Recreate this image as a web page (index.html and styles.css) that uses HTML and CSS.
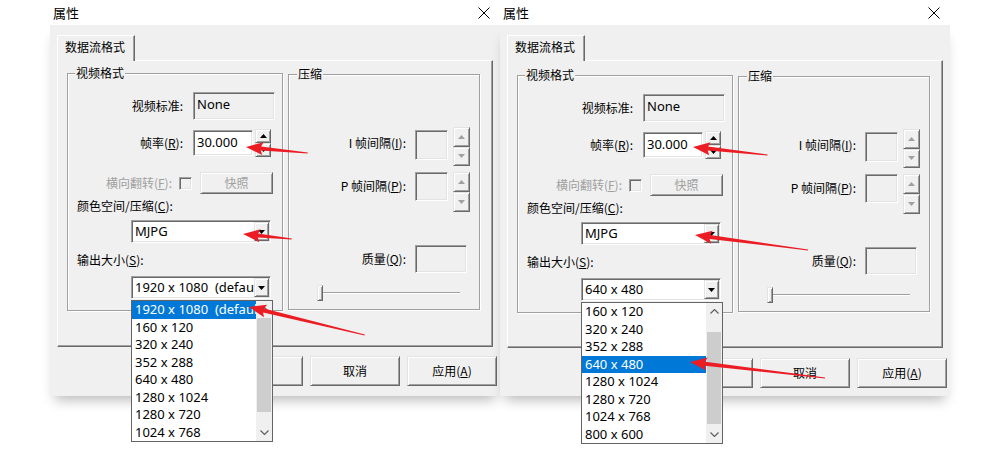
FILE: index.html
```html
<!DOCTYPE html>
<html lang="zh-CN">
<head>
<meta charset="utf-8">
<title>属性</title>
<link rel="stylesheet" href="styles.css">
</head>
<body>
<div class="stage">

  <section class="dialog">
    <header class="titlebar">
      <span class="title">属性</span>
      <svg class="close" width="12" height="12" viewBox="0 0 12 12"><path d="M0.5 0.5L11.5 11.5M11.5 0.5L0.5 11.5" stroke="#000" stroke-width="1" fill="none"/></svg>
    </header>
    <div class="dlg-body">
      <div class="tabstrip"><div class="tab">数据流格式</div></div>
      <div class="tabpage">
        <div class="group group-video">
          <span class="group-title">视频格式</span>
          <div class="row row-std">
            <span class="lbl lbl-video">视频标准:</span>
            <div class="field static sunken">None</div>
          </div>
          <div class="row row-rate">
            <span class="lbl lbl-video">帧率(<u>R</u>):</span>
            <div class="field edit sunken">30.000</div>
            <div class="spin spin-rate">
              <div class="spin-btn raised"><svg width="7" height="4" viewBox="0 0 7 4"><polygon points="0,4 3.5,0 7,4" fill="#000"/></svg></div>
              <div class="spin-btn raised"><svg width="7" height="4" viewBox="0 0 7 4"><polygon points="0,0 7,0 3.5,4" fill="#000"/></svg></div>
            </div>
          </div>
          <div class="row row-flip">
            <span class="lbl lbl-flip disabled">横向翻转(<u>F</u>):</span>
            <span class="checkbox sunken"></span>
            <div class="btn snap raised disabled">快照</div>
          </div>
          <div class="caption cap-color">颜色空间/压缩(<u>C</u>):</div>
          <div class="combo sunken combo-color">
            <span class="combo-text">MJPG</span>
            <span class="combo-btn raised"><svg width="7" height="4" viewBox="0 0 7 4"><polygon points="0,0 7,0 3.5,4" fill="#000"/></svg></span>
          </div>
          <div class="caption cap-size">输出大小(<u>S</u>):</div>
          <div class="combo sunken combo-size">
            <span class="combo-text">1920 x 1080  (default)</span>
            <span class="combo-btn raised"><svg width="7" height="4" viewBox="0 0 7 4"><polygon points="0,0 7,0 3.5,4" fill="#000"/></svg></span>
            <div class="droplist">
              <div class="items">
                <div class="item sel">1920 x 1080  (default)</div>
                <div class="item">160 x 120</div>
                <div class="item">320 x 240</div>
                <div class="item">352 x 288</div>
                <div class="item">640 x 480</div>
                <div class="item">1280 x 1024</div>
                <div class="item">1280 x 720</div>
                <div class="item">1024 x 768</div>
              </div>
              <div class="sb">
                <div class="sb-btn"><svg width="9" height="5" viewBox="0 0 9 5"><polyline points="0.5,4.5 4.5,0.5 8.5,4.5" fill="none" stroke="#606060" stroke-width="1.2"/></svg></div>
                <div class="sb-track"><div class="sb-thumb thumb-top"></div></div>
                <div class="sb-btn"><svg width="9" height="5" viewBox="0 0 9 5"><polyline points="0.5,0.5 4.5,4.5 8.5,0.5" fill="none" stroke="#606060" stroke-width="1.2"/></svg></div>
              </div>
            </div>
          </div>
        </div>
        <div class="group group-comp">
          <span class="group-title">压缩</span>
          <div class="row row-i">
            <span class="lbl lbl-comp">I 帧间隔(<u>I</u>):</span>
            <div class="field sfield sunken"></div>
            <div class="spin spin-tall">
              <div class="spin-btn raised"><svg width="7" height="4" viewBox="0 0 7 4"><polygon points="0,4 3.5,0 7,4" fill="#a0a0a0"/></svg></div>
              <div class="spin-btn raised"><svg width="7" height="4" viewBox="0 0 7 4"><polygon points="0,0 7,0 3.5,4" fill="#a0a0a0"/></svg></div>
            </div>
          </div>
          <div class="row row-p">
            <span class="lbl lbl-comp">P 帧间隔(<u>P</u>):</span>
            <div class="field sfield sunken"></div>
            <div class="spin spin-tall">
              <div class="spin-btn raised"><svg width="7" height="4" viewBox="0 0 7 4"><polygon points="0,4 3.5,0 7,4" fill="#a0a0a0"/></svg></div>
              <div class="spin-btn raised"><svg width="7" height="4" viewBox="0 0 7 4"><polygon points="0,0 7,0 3.5,4" fill="#a0a0a0"/></svg></div>
            </div>
          </div>
          <div class="row row-q">
            <span class="lbl lbl-comp">质量(<u>Q</u>):</span>
            <div class="field quality sunken"></div>
          </div>
          <div class="slider"><span class="thumb raised"></span><span class="track"></span></div>
        </div>
      </div>
      <div class="buttons">
        <div class="btn raised">确定</div>
        <div class="btn raised">取消</div>
        <div class="btn raised">应用(<u>A</u>)</div>
      </div>
    </div>
  </section>

  <section class="dialog dialog-alt">
    <header class="titlebar">
      <span class="title">属性</span>
      <svg class="close" width="12" height="12" viewBox="0 0 12 12"><path d="M0.5 0.5L11.5 11.5M11.5 0.5L0.5 11.5" stroke="#000" stroke-width="1" fill="none"/></svg>
    </header>
    <div class="dlg-body">
      <div class="tabstrip"><div class="tab">数据流格式</div></div>
      <div class="tabpage">
        <div class="group group-video">
          <span class="group-title">视频格式</span>
          <div class="row row-std">
            <span class="lbl lbl-video">视频标准:</span>
            <div class="field static sunken">None</div>
          </div>
          <div class="row row-rate">
            <span class="lbl lbl-video">帧率(<u>R</u>):</span>
            <div class="field edit sunken">30.000</div>
            <div class="spin spin-rate">
              <div class="spin-btn raised"><svg width="7" height="4" viewBox="0 0 7 4"><polygon points="0,4 3.5,0 7,4" fill="#000"/></svg></div>
              <div class="spin-btn raised"><svg width="7" height="4" viewBox="0 0 7 4"><polygon points="0,0 7,0 3.5,4" fill="#000"/></svg></div>
            </div>
          </div>
          <div class="row row-flip">
            <span class="lbl lbl-flip disabled">横向翻转(<u>F</u>):</span>
            <span class="checkbox sunken"></span>
            <div class="btn snap raised disabled">快照</div>
          </div>
          <div class="caption cap-color">颜色空间/压缩(<u>C</u>):</div>
          <div class="combo sunken combo-color">
            <span class="combo-text">MJPG</span>
            <span class="combo-btn raised"><svg width="7" height="4" viewBox="0 0 7 4"><polygon points="0,0 7,0 3.5,4" fill="#000"/></svg></span>
          </div>
          <div class="caption cap-size">输出大小(<u>S</u>):</div>
          <div class="combo sunken combo-size">
            <span class="combo-text">640 x 480</span>
            <span class="combo-btn raised"><svg width="7" height="4" viewBox="0 0 7 4"><polygon points="0,0 7,0 3.5,4" fill="#000"/></svg></span>
            <div class="droplist">
              <div class="items">
                <div class="item">160 x 120</div>
                <div class="item">320 x 240</div>
                <div class="item">352 x 288</div>
                <div class="item sel">640 x 480</div>
                <div class="item">1280 x 1024</div>
                <div class="item">1280 x 720</div>
                <div class="item">1024 x 768</div>
                <div class="item">800 x 600</div>
              </div>
              <div class="sb">
                <div class="sb-btn"><svg width="9" height="5" viewBox="0 0 9 5"><polyline points="0.5,4.5 4.5,0.5 8.5,4.5" fill="none" stroke="#606060" stroke-width="1.2"/></svg></div>
                <div class="sb-track"><div class="sb-thumb thumb-mid"></div></div>
                <div class="sb-btn"><svg width="9" height="5" viewBox="0 0 9 5"><polyline points="0.5,0.5 4.5,4.5 8.5,0.5" fill="none" stroke="#606060" stroke-width="1.2"/></svg></div>
              </div>
            </div>
          </div>
        </div>
        <div class="group group-comp">
          <span class="group-title">压缩</span>
          <div class="row row-i">
            <span class="lbl lbl-comp">I 帧间隔(<u>I</u>):</span>
            <div class="field sfield sunken"></div>
            <div class="spin spin-tall">
              <div class="spin-btn raised"><svg width="7" height="4" viewBox="0 0 7 4"><polygon points="0,4 3.5,0 7,4" fill="#a0a0a0"/></svg></div>
              <div class="spin-btn raised"><svg width="7" height="4" viewBox="0 0 7 4"><polygon points="0,0 7,0 3.5,4" fill="#a0a0a0"/></svg></div>
            </div>
          </div>
          <div class="row row-p">
            <span class="lbl lbl-comp">P 帧间隔(<u>P</u>):</span>
            <div class="field sfield sunken"></div>
            <div class="spin spin-tall">
              <div class="spin-btn raised"><svg width="7" height="4" viewBox="0 0 7 4"><polygon points="0,4 3.5,0 7,4" fill="#a0a0a0"/></svg></div>
              <div class="spin-btn raised"><svg width="7" height="4" viewBox="0 0 7 4"><polygon points="0,0 7,0 3.5,4" fill="#a0a0a0"/></svg></div>
            </div>
          </div>
          <div class="row row-q">
            <span class="lbl lbl-comp">质量(<u>Q</u>):</span>
            <div class="field quality sunken"></div>
          </div>
          <div class="slider"><span class="thumb raised"></span><span class="track"></span></div>
        </div>
      </div>
      <div class="buttons">
        <div class="btn raised">确定</div>
        <div class="btn raised">取消</div>
        <div class="btn raised">应用(<u>A</u>)</div>
      </div>
    </div>
  </section>

  <svg class="arrows" width="1000" height="450" viewBox="0 0 1000 450">
    <g fill="#ec1c24">
      <polygon transform="translate(246 147) rotate(5.53)" points="0,0 17,-6.5 15,-2 62,-0.5 62,0.5 15,2 17,6.5"/>
      <polygon transform="translate(243 234) rotate(5.83)" points="0,0 17,-6.5 15,-2 49,-0.5 49,0.5 15,2 17,6.5"/>
      <polygon transform="translate(249 307) rotate(13.57)" points="0,0 17,-6.5 15,-2 119,-0.5 119,0.5 15,2 17,6.5"/>
      <polygon transform="translate(693 147) rotate(6.09)" points="0,0 17,-6.5 15,-2 75,-0.5 75,0.5 15,2 17,6.5"/>
      <polygon transform="translate(695 235) rotate(7.56)" points="0,0 17,-6.5 15,-2 114,-0.5 114,0.5 15,2 17,6.5"/>
      <polygon transform="translate(690 362) rotate(6.76)" points="0,0 17,-6.5 15,-2 136,-0.5 136,0.5 15,2 17,6.5"/>
    </g>
  </svg>
</div>
</body>
</html>
```

FILE: styles.css
```css
* { box-sizing: border-box; }
html, body { margin: 0; padding: 0; background: #fff; }
body {
  width: 1000px;
  height: 450px;
  overflow: hidden;
  font-family: "Noto Sans CJK SC", "Noto Sans", sans-serif;
  font-size: 12px;
  color: #000;
}
u { text-decoration: underline; text-underline-offset: 1px; }

.stage {
  position: relative;
  width: 1000px;
  height: 450px;
  display: flex;
  padding-left: 50px;
}

.dialog {
  position: relative;
  width: 450px;
  display: flex;
  flex-direction: column;
}

.titlebar {
  height: 25px;
  background: #fff;
  display: flex;
  align-items: center;
  justify-content: space-between;
  padding: 0 10px 0 3px;
}
.title { font-size: 13px; line-height: 16px; }
.close { display: block; }

.dlg-body {
  height: 371px;
  background: #f0f0f0;
  padding: 10px 0 0 7px;
  box-shadow: 0 9px 12px -5px rgba(0, 0, 0, 0.28);
}

/* 3D edges */
.raised {
  border: 1px solid;
  border-color: #e3e3e3 #696969 #696969 #e3e3e3;
  box-shadow: inset 1px 1px #fff, inset -1px -1px #a0a0a0;
  background: #f0f0f0;
}
.sunken {
  border: 1px solid;
  border-color: #a0a0a0 #fff #fff #a0a0a0;
  box-shadow: inset 1px 1px #696969, inset -1px -1px #e3e3e3;
}

/* tab */
.tabstrip { display: flex; position: relative; z-index: 1; }
.tab {
  width: 78px;
  height: 26px;
  margin-bottom: -1px;
  background: #f0f0f0;
  border-top: 1px solid #fff;
  border-left: 1px solid #fff;
  border-right: 1px solid #696969;
  box-shadow: inset -1px 0 #a0a0a0;
  padding: 3px 0 0 7px;
  line-height: 16px;
}
.tabpage {
  width: 436px;
  height: 287px;
  border: 1px solid;
  border-color: #fff #696969 #696969 #fff;
  box-shadow: inset -1px -1px #a0a0a0;
  padding: 12px 0 0 9px;
  display: flex;
  gap: 5px;
  align-items: flex-start;
}

/* group boxes */
.group {
  position: relative;
  border: 1px solid #a0a0a0;
  box-shadow: inset 1px 1px #fff, 1px 1px #fff;
}
.group-title {
  position: absolute;
  top: -8px;
  left: 7px;
  padding: 0 1px;
  background: #f0f0f0;
  line-height: 14px;
}
.group-video { width: 216px; height: 238px; padding-top: 18px; }
.group-comp { width: 192px; height: 236px; margin-top: 1px; }
.group-comp .group-title { left: 8px; }

.row { display: flex; }
.lbl { text-align: right; line-height: 14px; white-space: nowrap; }
.disabled { color: #a0a0a0; }

.field {
  font-family: "Noto Sans", "DejaVu Sans", sans-serif;
  font-size: 13px;
  line-height: 18px;
  padding: 2px 0 0 3px;
}

/* video group */
.lbl-video { width: 115px; }
.row-std { height: 28px; align-items: center; }
.static { margin-left: 10px; width: 82px; height: 28px; background: #f0f0f0; }
.row-rate { margin-top: 9px; height: 28px; align-items: center; }
.edit { margin-left: 10px; width: 60px; height: 26px; background: #fff; }
.spin { display: flex; flex-direction: column; }
.spin-rate { margin-left: 2px; width: 16px; height: 28px; }
.spin-btn { flex: 1; display: flex; align-items: center; justify-content: center; }

.row-flip { margin-top: 15px; height: 22px; align-items: center; }
.lbl-flip { width: 104px; }
.checkbox { margin-left: 7px; width: 13px; height: 13px; background: #f0f0f0; }
.snap { margin-left: 8px; width: 73px; height: 22px; }

.caption { line-height: 14px; padding-left: 9px; }
.cap-color { margin-top: 5px; }
.cap-size { margin-top: 10px; }

.combo {
  position: relative;
  display: flex;
  width: 140px;
  height: 23px;
  margin-left: 63px;
  padding: 1px;
  background: #fff;
}
.combo-color { margin-top: 7px; }
.combo-size { margin-top: 9px; }
.combo-text {
  flex: 1;
  min-width: 0;
  overflow: hidden;
  white-space: pre;
  font-family: "Noto Sans", "DejaVu Sans", sans-serif;
  font-size: 13px;
  line-height: 19px;
  padding-left: 2px;
}
.combo-btn {
  width: 15px;
  height: 19px;
  display: flex;
  align-items: center;
  justify-content: center;
}

/* drop-down list */
.droplist {
  position: absolute;
  left: -1px;
  top: calc(100% + 2px);
  width: 142px;
  height: 142px;
  border: 1px solid #646464;
  background: #fff;
  display: flex;
  z-index: 5;
}
.items { flex: 1; min-width: 0; }
.item {
  height: 17.5px;
  line-height: 17.5px;
  padding-left: 3px;
  font-family: "Noto Sans", "DejaVu Sans", sans-serif;
  font-size: 13px;
  white-space: pre;
  overflow: hidden;
}
.item.sel { background: #0078d7; color: #fff; }
.sb { width: 16px; background: #f0f0f0; display: flex; flex-direction: column; }
.sb-btn { height: 17px; display: flex; align-items: center; justify-content: center; }
.sb-track { flex: 1; }
.sb-thumb { background: #cdcdcd; margin: 0 1px; }
.thumb-top { height: 94px; }
.thumb-mid { margin-top: 12px; height: 92px; }

/* compression group */
.lbl-comp { width: 117px; }
.row-i, .row-p, .row-q { align-items: flex-start; }
.row-i { margin-top: 52px; height: 39px; }
.row-i .lbl { margin-top: 9px; }
.row-i .sfield { margin-top: 3px; height: 30px; }
.row-p { margin-top: 6px; height: 40px; }
.row-p .lbl { margin-top: 7px; }
.row-p .sfield { height: 29px; }
.sfield { margin-left: 9px; width: 33px; background: #f0f0f0; }
.spin-tall { margin-left: 5px; width: 17px; align-self: stretch; }
.row-q { margin-top: 33px; height: 28px; }
.row-q .lbl { margin-top: 7px; }
.quality { margin-left: 9px; width: 52px; height: 28px; background: #f0f0f0; }

.slider {
  display: flex;
  align-items: center;
  margin: 12px 0 0 28px;
  height: 16px;
}
.thumb { width: 6px; height: 16px; }
.track {
  width: 137px;
  height: 2px;
  border-top: 1px solid #a0a0a0;
  border-bottom: 1px solid #fff;
}

/* bottom buttons */
.buttons {
  display: flex;
  justify-content: flex-end;
  gap: 7px;
  padding-right: 3px;
  margin-top: 9px;
}
.btn {
  width: 90px;
  height: 30px;
  display: flex;
  align-items: center;
  justify-content: center;
  line-height: 14px;
}
.snap.btn { width: 73px; height: 22px; }

/* second dialog sits slightly lower */
.dialog-alt .tabpage { padding-top: 14px; height: 288px; }
.dialog-alt .buttons { margin-top: 10px; }

/* annotation arrows */
.arrows {
  position: absolute;
  left: 0;
  top: 0;
  z-index: 20;
  pointer-events: none;
}
```
